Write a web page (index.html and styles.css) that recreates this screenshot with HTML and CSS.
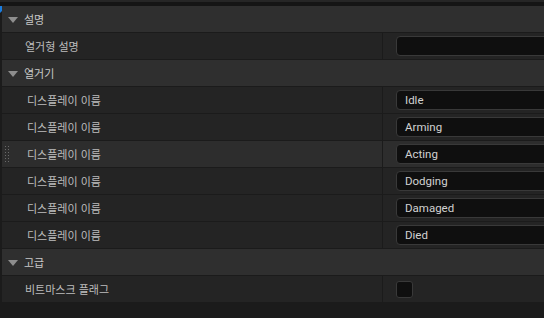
FILE: index.html
```html
<!DOCTYPE html>
<html lang="ko">
<head>
    <meta charset="UTF-8">
    <title>Enum Details</title>
    <link rel="stylesheet" href="styles.css">
</head>
<body>
    <div class="panel">
        <div class="top-bar"></div>
        <div class="list">
            <span class="corner"></span>

            <div class="header"><span class="arrow"></span>설명</div>
            <div class="row">
                <div class="name">열거형 설명</div>
                <div class="value"><div class="field"></div></div>
            </div>

            <div class="header"><span class="arrow"></span>열거기</div>
            <div class="row">
                <div class="name sub">디스플레이 이름</div>
                <div class="value"><div class="field">Idle</div></div>
            </div>
            <div class="row">
                <div class="name sub">디스플레이 이름</div>
                <div class="value"><div class="field">Arming</div></div>
            </div>
            <div class="row hover">
                <span class="grip"></span>
                <div class="name sub">디스플레이 이름</div>
                <div class="value"><div class="field">Acting</div></div>
            </div>
            <div class="row">
                <div class="name sub">디스플레이 이름</div>
                <div class="value"><div class="field">Dodging</div></div>
            </div>
            <div class="row">
                <div class="name sub">디스플레이 이름</div>
                <div class="value"><div class="field">Damaged</div></div>
            </div>
            <div class="row">
                <div class="name sub">디스플레이 이름</div>
                <div class="value"><div class="field">Died</div></div>
            </div>

            <div class="header"><span class="arrow"></span>고급</div>
            <div class="row">
                <div class="name">비트마스크 플래그</div>
                <div class="value"><div class="check"></div></div>
            </div>
        </div>
    </div>
</body>
</html>
```

FILE: styles.css
```css
body {
    margin: 0;
    background-color: #1b1b1b;
    font-family: "Noto Sans CJK KR", Roboto, sans-serif;
    font-size: 11px;
    color: #bdbdbd;
    overflow: hidden;
}
.panel {
    width: 544px;
    height: 318px;
}
.top-bar {
    height: 2px;
    background-color: #262626;
    border-bottom: 4px solid #151515;
}
.list {
    position: relative;
    padding-left: 2px;
}
.corner {
    position: absolute;
    left: 0;
    top: 0;
    width: 0;
    height: 0;
    border-top: 7px solid #1a7de0;
    border-right: 7px solid transparent;
}
.header {
    display: flex;
    align-items: center;
    height: 26px;
    border-bottom: 1px solid #1b1b1b;
    background-color: #2f2f2f;
    padding-left: 22px;
    position: relative;
    color: #c8c8c8;
}
.arrow {
    position: absolute;
    left: 6px;
    top: 11px;
    width: 0;
    height: 0;
    border-left: 5px solid transparent;
    border-right: 5px solid transparent;
    border-top: 6px solid #8e8e8e;
}
.row {
    display: flex;
    height: 26px;
    border-bottom: 1px solid #1b1b1b;
    background-color: #242424;
    position: relative;
}
.row.hover {
    background-color: #2d2d2d;
}
.name {
    width: 357px;
    padding-left: 23px;
    display: flex;
    align-items: center;
    border-right: 1px solid #1b1b1b;
}
.name.sub {
    width: 355px;
    padding-left: 25px;
}
.value {
    flex: 1;
    display: flex;
    align-items: center;
    padding-left: 13px;
    overflow: hidden;
}
.field {
    flex: none;
    width: 200px;
    height: 18px;
    box-sizing: content-box;
    background-color: #0f0f0f;
    border: 1px solid #393939;
    border-radius: 4px;
    padding-left: 8px;
    font-family: Roboto, sans-serif;
    font-size: 11.5px;
    line-height: 18px;
    color: #d2d2d2;
}
.check {
    width: 15px;
    height: 15px;
    background-color: #0f0f0f;
    border: 1px solid #393939;
    border-radius: 3px;
}
.grip {
    position: absolute;
    left: 2px;
    top: 4px;
    width: 5px;
    height: 17px;
    background-image: radial-gradient(circle, #6a6a6a 0.6px, transparent 0.9px);
    background-size: 3px 3px;
}
```
